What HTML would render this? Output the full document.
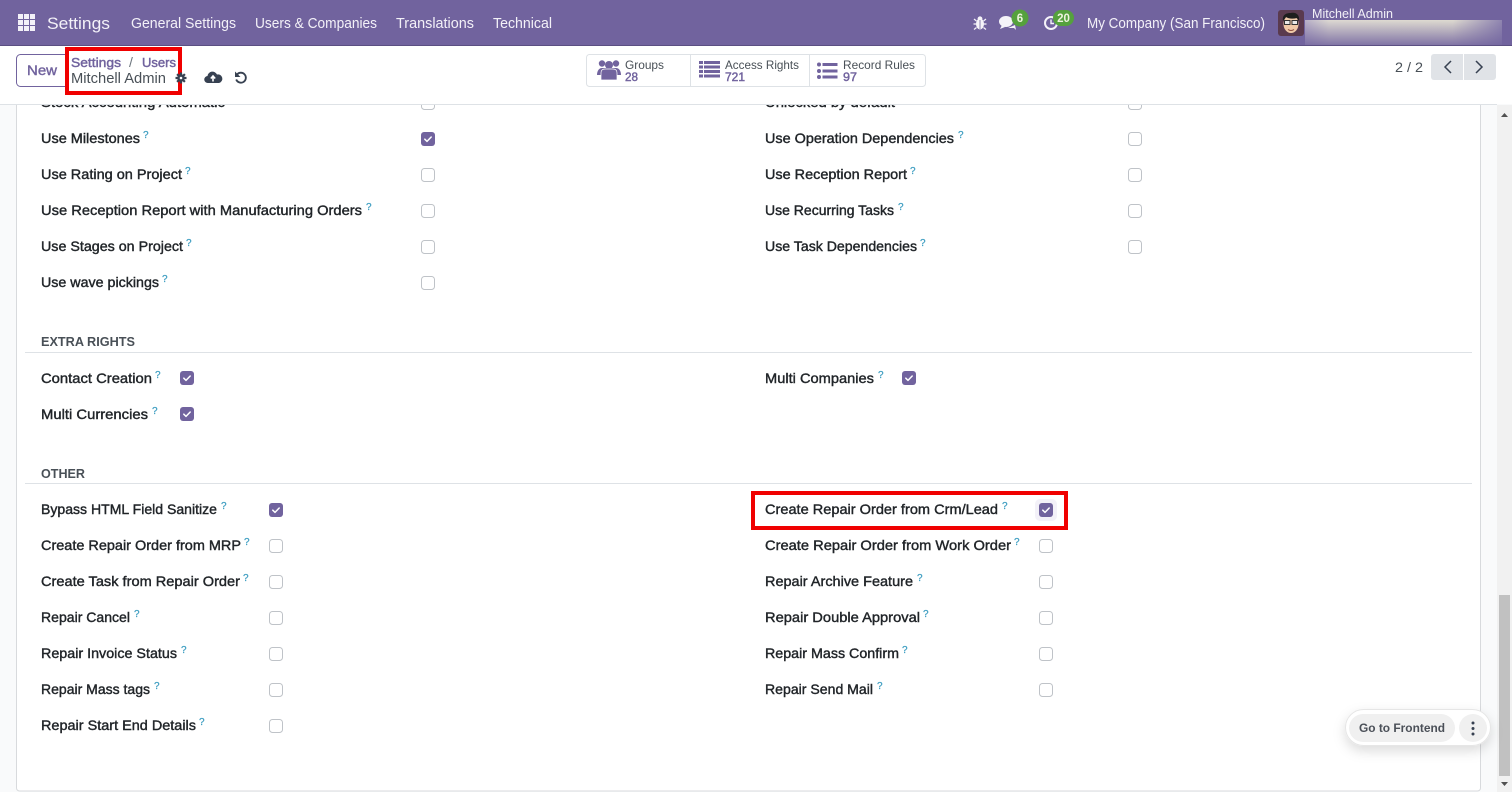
<!DOCTYPE html>
<html><head><meta charset="utf-8"><title>Settings</title>
<style>
html,body{margin:0;padding:0;width:1512px;height:792px;overflow:hidden;background:#f9fafb}
svg{display:block;font-family:"Liberation Sans",sans-serif}
.l{font-size:14px;fill:#212529;stroke:#212529;stroke-width:.4px}
.q{font-size:10px;fill:#3a9cc0;stroke:#3a9cc0;stroke-width:.2px;transform:translateY(1px)}
.h{font-size:12.5px;font-weight:bold;fill:#495057}
.n{font-size:14.5px;fill:#f3f1f8}
.s{font-size:12px;fill:#495057}
.c{font-size:12px;fill:#71639e;stroke:#71639e;stroke-width:.45px}
.p{font-size:12.5px;fill:#71639e;stroke:#71639e;stroke-width:.45px}
.bx{fill:#fff;stroke:#bfc3c8;stroke-width:1}
.on{fill:#71639e}
.ck{fill:none;stroke:#fff;stroke-width:1.5;stroke-linecap:round;stroke-linejoin:round}
</style></head><body>
<svg width="1512" height="792" viewBox="0 0 1512 792" xmlns="http://www.w3.org/2000/svg">
<defs>
<linearGradient id="bl" x1="0" x2="1" y1="0" y2="0"><stop offset="0" stop-color="#b8b0c8"/><stop offset=".12" stop-color="#ddd9d2"/><stop offset=".75" stop-color="#dedad0"/><stop offset="1" stop-color="#8f85b0"/></linearGradient>
<linearGradient id="bv" x1="0" x2="0" y1="0" y2="1"><stop offset="0" stop-color="#71639e" stop-opacity="0"/><stop offset="1" stop-color="#71639e" stop-opacity=".85"/></linearGradient>
<filter id="sh" x="-20%" y="-50%" width="140%" height="220%"><feDropShadow dx="0" dy="5" stdDeviation="6" flood-color="#000" flood-opacity=".14"/></filter>
<g id="y"><rect x="-7" y="-7" width="14" height="14" rx="3" class="on"/><path d="M-3.2 .2L-1 2.4L3.2-2" class="ck"/></g>
<g id="o"><rect x="-6.5" y="-6.5" width="13" height="13" rx="3" class="bx"/></g>
</defs>

<rect width="1512" height="792" fill="#f9fafb"/>
<rect x="16.5" y="96" width="1464" height="695" rx="3" fill="#fff" stroke="#d8dadd"/>

<!-- clipped first row -->
<text x="41" y="107" class="l" textLength="184" lengthAdjust="spacingAndGlyphs">Stock Accounting Automatic</text>
<text x="765" y="107" class="l" textLength="130" lengthAdjust="spacingAndGlyphs">Unlocked by default</text>
<use href="#o" x="428" y="103"/><use href="#o" x="1135" y="103"/>

<!-- control panel -->
<rect x="0" y="45" width="1512" height="59" fill="#fff"/>
<rect x="0" y="104" width="1497" height="1" fill="#dee2e6"/>

<!-- navbar -->
<rect width="1512" height="45" fill="#71639e"/>
<rect y="45" width="1512" height="1" fill="#5b4f82"/>
<g fill="#f3f1f8">
<rect x="18" y="14" width="5" height="5"/><rect x="24" y="14" width="5" height="5"/><rect x="30" y="14" width="5" height="5"/>
<rect x="18" y="20" width="5" height="5"/><rect x="24" y="20" width="5" height="5"/><rect x="30" y="20" width="5" height="5"/>
<rect x="18" y="26" width="5" height="5"/><rect x="24" y="26" width="5" height="5"/><rect x="30" y="26" width="5" height="5"/>
</g>
<text x="47" y="29" font-size="17" fill="#f3f1f8" textLength="63" lengthAdjust="spacingAndGlyphs">Settings</text>
<text x="131" y="28" class="n" textLength="105" lengthAdjust="spacingAndGlyphs">General Settings</text>
<text x="255" y="28" class="n" textLength="122" lengthAdjust="spacingAndGlyphs">Users &amp; Companies</text>
<text x="396" y="28" class="n" textLength="78" lengthAdjust="spacingAndGlyphs">Translations</text>
<text x="493" y="28" class="n" textLength="59" lengthAdjust="spacingAndGlyphs">Technical</text>

<!-- bug -->
<g fill="#f5f3f9"><ellipse cx="980" cy="24" rx="4" ry="5.5"/><circle cx="980" cy="18.8" r="2.4"/></g>
<path d="M974 19l2.500 2M986 19l-2.500 2M973.500 24h3M986.500 24h-3M974 29.500l2.500-2M986 29.500l-2.500-2" stroke="#f5f3f9" stroke-width="1.200" fill="none"/>
<path d="M980 20v9" stroke="#71639e" stroke-width=".8"/>
<!-- chat -->
<ellipse cx="1006" cy="21.500" rx="7" ry="5.500" fill="#f5f3f9"/><path d="M1002 25l-2 4 5-2z" fill="#f5f3f9"/>
<path d="M1008 28h6l2 2-1-5z" fill="#f5f3f9"/>
<circle cx="1020" cy="18" r="8.500" fill="#55a13d"/>
<text x="1020" y="22" font-size="11.500" font-weight="bold" fill="#eef3df" text-anchor="middle">6</text>
<!-- clock -->
<circle cx="1051" cy="23" r="6" fill="none" stroke="#f5f3f9" stroke-width="2"/>
<path d="M1051 19.500v4h3" stroke="#f5f3f9" stroke-width="1.400" fill="none"/>
<rect x="1053" y="10" width="21" height="16" rx="8" fill="#55a13d"/>
<text x="1063.500" y="22" font-size="11.500" font-weight="bold" fill="#eef3df" text-anchor="middle">20</text>

<text x="1087" y="28" class="n" textLength="178" lengthAdjust="spacingAndGlyphs">My Company (San Francisco)</text>

<!-- avatar -->
<rect x="1278" y="10" width="26" height="26" rx="3" fill="#5a3a4e"/>
<ellipse cx="1291" cy="24" rx="7.500" ry="9" fill="#f0c9a8"/>
<path d="M1283 21c-1-7 4-8 8-8 5-1 9 2 8 8l-2-3c-4 1-8 1-11-1z" fill="#1e1e1e"/>
<rect x="1284.500" y="20.500" width="5.500" height="4" fill="#e8e8e8" stroke="#333"/><rect x="1292" y="20.500" width="5.500" height="4" fill="#e8e8e8" stroke="#333"/>
<path d="M1288 29.500q3 2 6 0" stroke="#8a4b3c" fill="none"/>
<text x="1312" y="18" font-size="12.500" fill="#f3f1f8" textLength="81" lengthAdjust="spacingAndGlyphs">Mitchell Admin</text>
<rect x="1305" y="20" width="197" height="25" fill="url(#bl)"/>
<rect x="1305" y="20" width="197" height="25" fill="url(#bv)"/>

<!-- control panel content -->
<rect x="16.500" y="54.500" width="66" height="32" rx="4" fill="#fff" stroke="#71639e"/>
<text x="27" y="75" font-size="14" fill="#71639e" stroke="#71639e" stroke-width=".4" textLength="30" lengthAdjust="spacingAndGlyphs">New</text>
<rect x="67" y="49" width="113" height="44" fill="#fff" stroke="#f00000" stroke-width="4"/>
<text x="71" y="67" class="p" textLength="50" lengthAdjust="spacingAndGlyphs">Settings</text>
<text x="129" y="67" font-size="14" fill="#6c757d">/</text>
<text x="142" y="67" class="p" textLength="34" lengthAdjust="spacingAndGlyphs">Users</text>
<text x="71" y="83" font-size="14.500" fill="#495057" textLength="95" lengthAdjust="spacingAndGlyphs">Mitchell Admin</text>
<!-- gear -->
<path d="M181 72.500v11M175.500 78h11M177.100 74.100l7.800 7.800M184.900 74.100l-7.800 7.800" stroke="#374151" stroke-width="2.200"/>
<circle cx="181" cy="78" r="3.800" fill="#374151"/>
<circle cx="181" cy="78" r="1.300" fill="#fff"/>
<!-- cloud -->
<path d="M208 83a3.500 3.500 0 0 1-.5-7 5 5 0 0 1 9.500-1.500 4.300 4.300 0 0 1 2 8.500z" fill="#374151"/>
<path d="M213 81.500v-5M210.800 78.500l2.200-2.500 2.200 2.500" stroke="#fff" stroke-width="1.600" fill="none"/>
<!-- undo -->
<path d="M237 74.500a5 5 0 1 1-.8 5" fill="none" stroke="#374151" stroke-width="1.800"/>
<path d="M235 71.500v5.500h5.500z" fill="#374151"/>

<!-- stat buttons -->
<rect x="586.500" y="54.500" width="339" height="32" rx="3" fill="#fff" stroke="#dee2e6"/>
<path d="M690.500 55v31M809.500 55v31" stroke="#dee2e6"/>
<g fill="#71639e">
<circle cx="602" cy="63.500" r="3.200"/><circle cx="616" cy="63.500" r="3.200"/><circle cx="609" cy="65" r="4"/>
<path d="M597 75c0-4 2-7 5-7h14c3 0 5 3 5 7z"/><path d="M601 80v-7q0-4 4-4h8q4 0 4 4v7z" stroke="#fff" stroke-width=".7"/>
<rect x="699" y="61" width="4" height="3"/><rect x="704" y="61" width="16" height="3"/>
<rect x="699" y="65.500" width="4" height="3"/><rect x="704" y="65.500" width="16" height="3"/>
<rect x="699" y="70" width="4" height="3"/><rect x="704" y="70" width="16" height="3"/>
<rect x="699" y="74.500" width="4" height="3"/><rect x="704" y="74.500" width="16" height="3"/>
<circle cx="819" cy="64.500" r="2"/><rect x="822.500" y="63" width="15" height="3"/>
<circle cx="819" cy="71" r="2"/><rect x="822.500" y="69.500" width="15" height="3"/>
<circle cx="819" cy="77" r="2"/><rect x="822.500" y="75.500" width="15" height="3"/>
</g>
<text x="625" y="69" class="s" textLength="39" lengthAdjust="spacingAndGlyphs">Groups</text>
<text x="625" y="81" class="c" textLength="13" lengthAdjust="spacingAndGlyphs">28</text>
<text x="725" y="69" class="s" textLength="74" lengthAdjust="spacingAndGlyphs">Access Rights</text>
<text x="725" y="81" class="c" textLength="20" lengthAdjust="spacingAndGlyphs">721</text>
<text x="843" y="69" class="s" textLength="72" lengthAdjust="spacingAndGlyphs">Record Rules</text>
<text x="843" y="81" class="c" textLength="14" lengthAdjust="spacingAndGlyphs">97</text>

<!-- pager -->
<text x="1395" y="72" font-size="14" fill="#495057" textLength="28" lengthAdjust="spacingAndGlyphs">2 / 2</text>
<rect x="1431" y="54" width="65" height="26" rx="3" fill="#e0e3e7"/>
<rect x="1463" y="54" width="1" height="26" fill="#fff"/>
<path d="M1451 61l-6 6 6 6M1476 61l6 6-6 6" fill="none" stroke="#374151" stroke-width="1.500"/>

<!-- rows top -->
<text x="41" y="143" class="l" textLength="99" lengthAdjust="spacingAndGlyphs">Use Milestones</text><text x="143" y="137" class="q">?</text><use href="#y" x="428" y="139"/>
<text x="41" y="179" class="l" textLength="141" lengthAdjust="spacingAndGlyphs">Use Rating on Project</text><text x="185" y="173" class="q">?</text><use href="#o" x="428" y="175"/>
<text x="41" y="215" class="l" textLength="321" lengthAdjust="spacingAndGlyphs">Use Reception Report with Manufacturing Orders</text><text x="366" y="209" class="q">?</text><use href="#o" x="428" y="211"/>
<text x="41" y="251" class="l" textLength="142" lengthAdjust="spacingAndGlyphs">Use Stages on Project</text><text x="186" y="245" class="q">?</text><use href="#o" x="428" y="247"/>
<text x="41" y="287" class="l" textLength="118" lengthAdjust="spacingAndGlyphs">Use wave pickings</text><text x="162" y="281" class="q">?</text><use href="#o" x="428" y="283"/>

<text x="765" y="143" class="l" textLength="189" lengthAdjust="spacingAndGlyphs">Use Operation Dependencies</text><text x="958" y="137" class="q">?</text><use href="#o" x="1135" y="139"/>
<text x="765" y="179" class="l" textLength="142" lengthAdjust="spacingAndGlyphs">Use Reception Report</text><text x="910" y="173" class="q">?</text><use href="#o" x="1135" y="175"/>
<text x="765" y="215" class="l" textLength="129" lengthAdjust="spacingAndGlyphs">Use Recurring Tasks</text><text x="898" y="209" class="q">?</text><use href="#o" x="1135" y="211"/>
<text x="765" y="251" class="l" textLength="152" lengthAdjust="spacingAndGlyphs">Use Task Dependencies</text><text x="920" y="245" class="q">?</text><use href="#o" x="1135" y="247"/>

<!-- extra rights -->
<text x="41" y="346" class="h" textLength="94" lengthAdjust="spacingAndGlyphs">EXTRA RIGHTS</text>
<rect x="25" y="352" width="1447" height="1" fill="#dee2e6"/>
<text x="41" y="383" class="l" textLength="111" lengthAdjust="spacingAndGlyphs">Contact Creation</text><text x="155" y="377" class="q">?</text><use href="#y" x="187" y="378"/>
<text x="41" y="419" class="l" textLength="107" lengthAdjust="spacingAndGlyphs">Multi Currencies</text><text x="152" y="413" class="q">?</text><use href="#y" x="187" y="414"/>
<text x="765" y="383" class="l" textLength="109" lengthAdjust="spacingAndGlyphs">Multi Companies</text><text x="878" y="377" class="q">?</text><use href="#y" x="909" y="378"/>

<!-- other -->
<text x="41" y="478" class="h" textLength="44" lengthAdjust="spacingAndGlyphs">OTHER</text>
<rect x="25" y="483" width="1447" height="1" fill="#dee2e6"/>
<text x="41" y="514" class="l" textLength="176" lengthAdjust="spacingAndGlyphs">Bypass HTML Field Sanitize</text><text x="221" y="508" class="q">?</text><use href="#y" x="276" y="510"/>
<text x="41" y="550" class="l" textLength="200" lengthAdjust="spacingAndGlyphs">Create Repair Order from MRP</text><text x="244" y="544" class="q">?</text><use href="#o" x="276" y="546"/>
<text x="41" y="586" class="l" textLength="199" lengthAdjust="spacingAndGlyphs">Create Task from Repair Order</text><text x="243" y="580" class="q">?</text><use href="#o" x="276" y="582"/>
<text x="41" y="622" class="l" textLength="89" lengthAdjust="spacingAndGlyphs">Repair Cancel</text><text x="134" y="616" class="q">?</text><use href="#o" x="276" y="618"/>
<text x="41" y="658" class="l" textLength="136" lengthAdjust="spacingAndGlyphs">Repair Invoice Status</text><text x="181" y="652" class="q">?</text><use href="#o" x="276" y="654"/>
<text x="41" y="694" class="l" textLength="109" lengthAdjust="spacingAndGlyphs">Repair Mass tags</text><text x="154" y="688" class="q">?</text><use href="#o" x="276" y="690"/>
<text x="41" y="730" class="l" textLength="155" lengthAdjust="spacingAndGlyphs">Repair Start End Details</text><text x="199" y="724" class="q">?</text><use href="#o" x="276" y="726"/>

<rect x="753" y="493" width="313" height="35" fill="#fff" stroke="#f00000" stroke-width="4"/>
<text x="765" y="514" class="l" textLength="233" lengthAdjust="spacingAndGlyphs">Create Repair Order from Crm/Lead</text><text x="1002" y="508" class="q">?</text>
<rect x="1035" y="499" width="22" height="22" rx="5" fill="#f3f1f8"/><use href="#y" x="1046" y="510"/>
<text x="765" y="550" class="l" textLength="246" lengthAdjust="spacingAndGlyphs">Create Repair Order from Work Order</text><text x="1014" y="544" class="q">?</text><use href="#o" x="1046" y="546"/>
<text x="765" y="586" class="l" textLength="148" lengthAdjust="spacingAndGlyphs">Repair Archive Feature</text><text x="917" y="580" class="q">?</text><use href="#o" x="1046" y="582"/>
<text x="765" y="622" class="l" textLength="155" lengthAdjust="spacingAndGlyphs">Repair Double Approval</text><text x="923" y="616" class="q">?</text><use href="#o" x="1046" y="618"/>
<text x="765" y="658" class="l" textLength="134" lengthAdjust="spacingAndGlyphs">Repair Mass Confirm</text><text x="902" y="652" class="q">?</text><use href="#o" x="1046" y="654"/>
<text x="765" y="694" class="l" textLength="108" lengthAdjust="spacingAndGlyphs">Repair Send Mail</text><text x="877" y="688" class="q">?</text><use href="#o" x="1046" y="690"/>

<!-- scrollbar -->
<rect x="1497" y="105" width="15" height="687" fill="#f1f1f1"/>
<rect x="1499" y="595" width="11" height="181" fill="#c1c1c1"/>
<path d="M1501 117l3.500-4 3.500 4z" fill="#505050"/>
<path d="M1501 782l3.500 4 3.500-4z" fill="#505050"/>

<!-- frontend pill -->
<rect x="1345.500" y="709.500" width="145" height="36" rx="18" fill="#fff" stroke="#e6e6e6" filter="url(#sh)"/>
<rect x="1349" y="714" width="106" height="28" rx="14" fill="#f0f0f0"/>
<circle cx="1473" cy="728" r="14" fill="#f0f0f0"/>
<text x="1359" y="732" font-size="12" font-weight="bold" fill="#4b5058" textLength="86" lengthAdjust="spacingAndGlyphs">Go to Frontend</text>
<circle cx="1473" cy="723" r="1.500" fill="#374151"/><circle cx="1473" cy="728.500" r="1.500" fill="#374151"/><circle cx="1473" cy="734" r="1.500" fill="#374151"/>
</svg>
</body></html>
